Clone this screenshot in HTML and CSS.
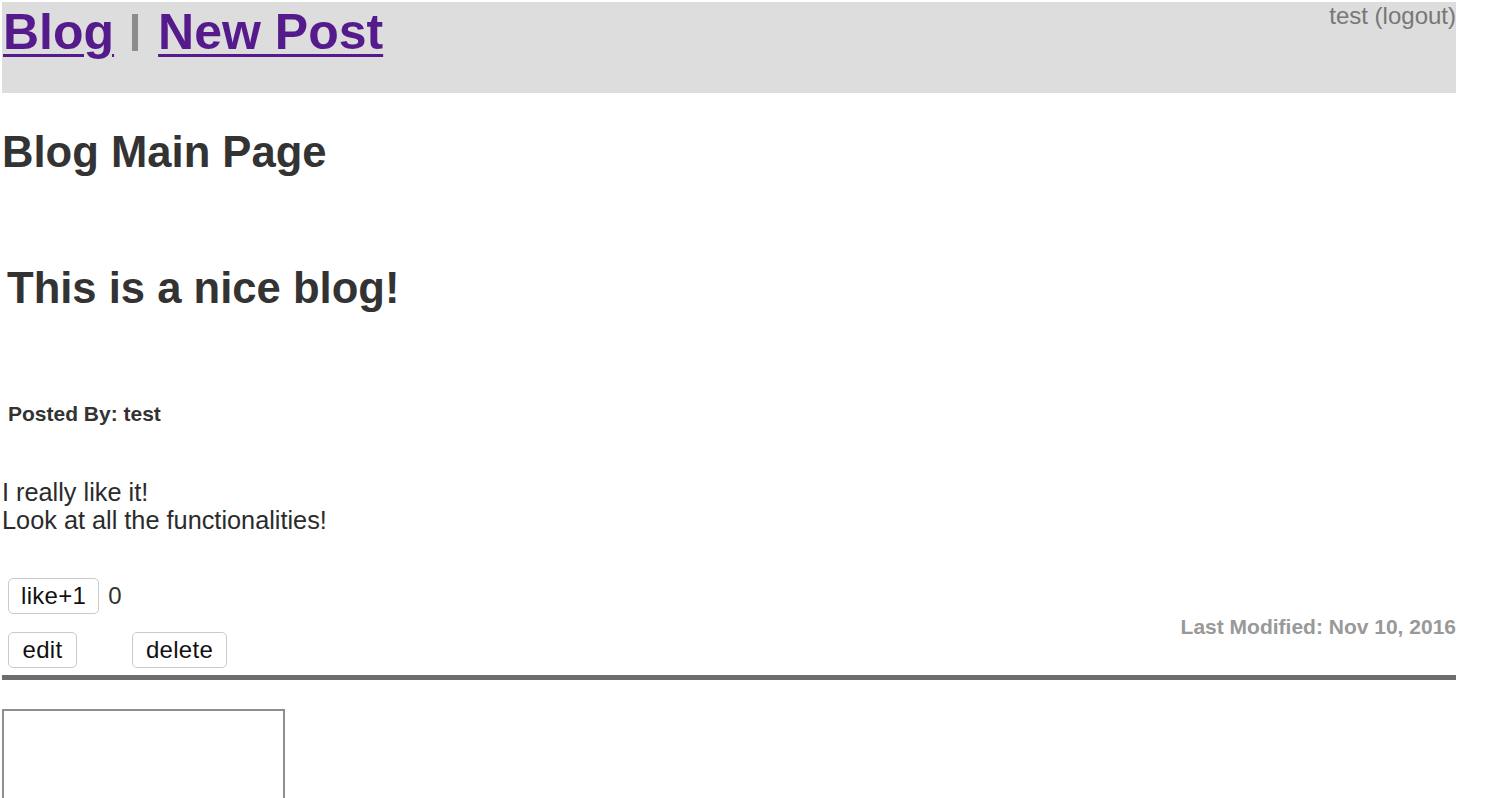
FILE: index.html
```html
<!DOCTYPE html>
<html lang="en">
<head>
<meta charset="utf-8">
<title>Blog Main Page</title>
<link rel="stylesheet" href="styles.css">
</head>
<body>
<div class="page">
  <header class="topbar">
    <nav class="nav">
      <a class="nav-link nav-link-first" href="#">Blog</a>
      <span class="nav-sep" aria-hidden="true"></span>
      <a class="nav-link" href="#">New Post</a>
    </nav>
    <a class="user" href="#">test (logout)</a>
  </header>

  <h1 class="page-title">Blog Main Page</h1>

  <article class="post">
    <h2 class="post-title">This is a nice blog!</h2>
    <p class="byline">Posted By: test</p>
    <div class="post-body">I really like it!<br>Look at all the functionalities!</div>

    <div class="post-footer">
      <div class="actions">
        <div class="action-row">
          <button class="btn btn-like" type="button">like+1</button>
          <span class="like-count">0</span>
        </div>
        <div class="action-row action-row-second">
          <button class="btn btn-edit" type="button">edit</button>
          <button class="btn btn-delete" type="button">delete</button>
        </div>
      </div>
      <div class="modified">Last Modified: Nov 10, 2016</div>
    </div>
    <div class="divider"></div>
    <textarea class="comment-box" aria-label="comment"></textarea>
  </article>
</div>
</body>
</html>
```

FILE: styles.css
```css
html, body {
  margin: 0;
  padding: 0;
  background: #fff;
}

body {
  font-family: "Liberation Sans", Arial, Helvetica, sans-serif;
  color: #333;
  padding: 2px 0 0 2px;
  overflow: hidden;
}

.page {
  width: 1454px;
}

.topbar {
  height: 91px;
  background: #dddddd;
  display: flex;
  justify-content: space-between;
  align-items: flex-start;
}

.nav {
  display: flex;
  align-items: flex-start;
  font-size: 50px;
  font-weight: bold;
  line-height: 57px;
  padding-top: 2px;
}

.nav-link {
  color: #551a8b;
  text-decoration: underline;
  text-decoration-thickness: 3px;
  text-underline-offset: 5px;
}

.nav-link-first {
  margin-left: 1px;
}

.nav-sep {
  display: inline-block;
  width: 6px;
  height: 37px;
  background: #8c8c8c;
  margin: 10px 20px 0 18px;
}

.user {
  color: #777;
  text-decoration: none;
  font-size: 24px;
  line-height: 27px;
  margin-top: 0;
}

.page-title {
  margin: 35px 0 0 0;
  font-size: 43.6px;
  line-height: 49px;
  font-weight: bold;
  color: #333;
}

.post {
  display: flex;
  flex-direction: column;
}

.post-title {
  margin: 87px 0 0 5px;
  font-size: 43.6px;
  line-height: 49px;
  font-weight: bold;
  color: #333;
}

.byline {
  margin: 89px 0 0 6px;
  font-size: 21px;
  line-height: 24px;
  font-weight: bold;
  color: #333;
}

.post-body {
  margin-top: 52px;
  font-size: 25.3px;
  line-height: 28px;
  color: #2b2b2b;
}

.post-footer {
  margin-top: 44px;
  display: flex;
  justify-content: space-between;
  align-items: flex-end;
}

.actions {
  display: flex;
  flex-direction: column;
  padding-left: 6px;
}

.action-row {
  display: flex;
  align-items: center;
}

.action-row-second {
  margin-top: 18px;
}

.btn {
  font-family: "Liberation Sans", Arial, Helvetica, sans-serif;
  font-size: 24px;
  line-height: 28px;
  letter-spacing: 0.3px;
  color: #111;
  background: #fff;
  border: 1px solid #cacaca;
  border-radius: 5px;
  padding: 3px 13.5px;
  margin: 0;
}

.btn-like {
  padding: 3px 12px;
}

.btn-delete {
  padding: 3px 13px;
  margin-left: 55px;
}

.like-count {
  font-size: 24px;
  line-height: 28px;
  color: #333;
  margin-left: 9px;
}

.modified {
  font-size: 21px;
  line-height: 24px;
  font-weight: bold;
  color: #999;
  margin-bottom: 29px;
}

.divider {
  margin-top: 7px;
  height: 5px;
  background: #6d6d6d;
}

.comment-box {
  margin-top: 29px;
  width: 283px;
  height: 160px;
  box-sizing: border-box;
  border: 2px solid #8e8e8e;
  border-radius: 0;
  padding: 0;
  resize: none;
  background: #fff;
}
```
